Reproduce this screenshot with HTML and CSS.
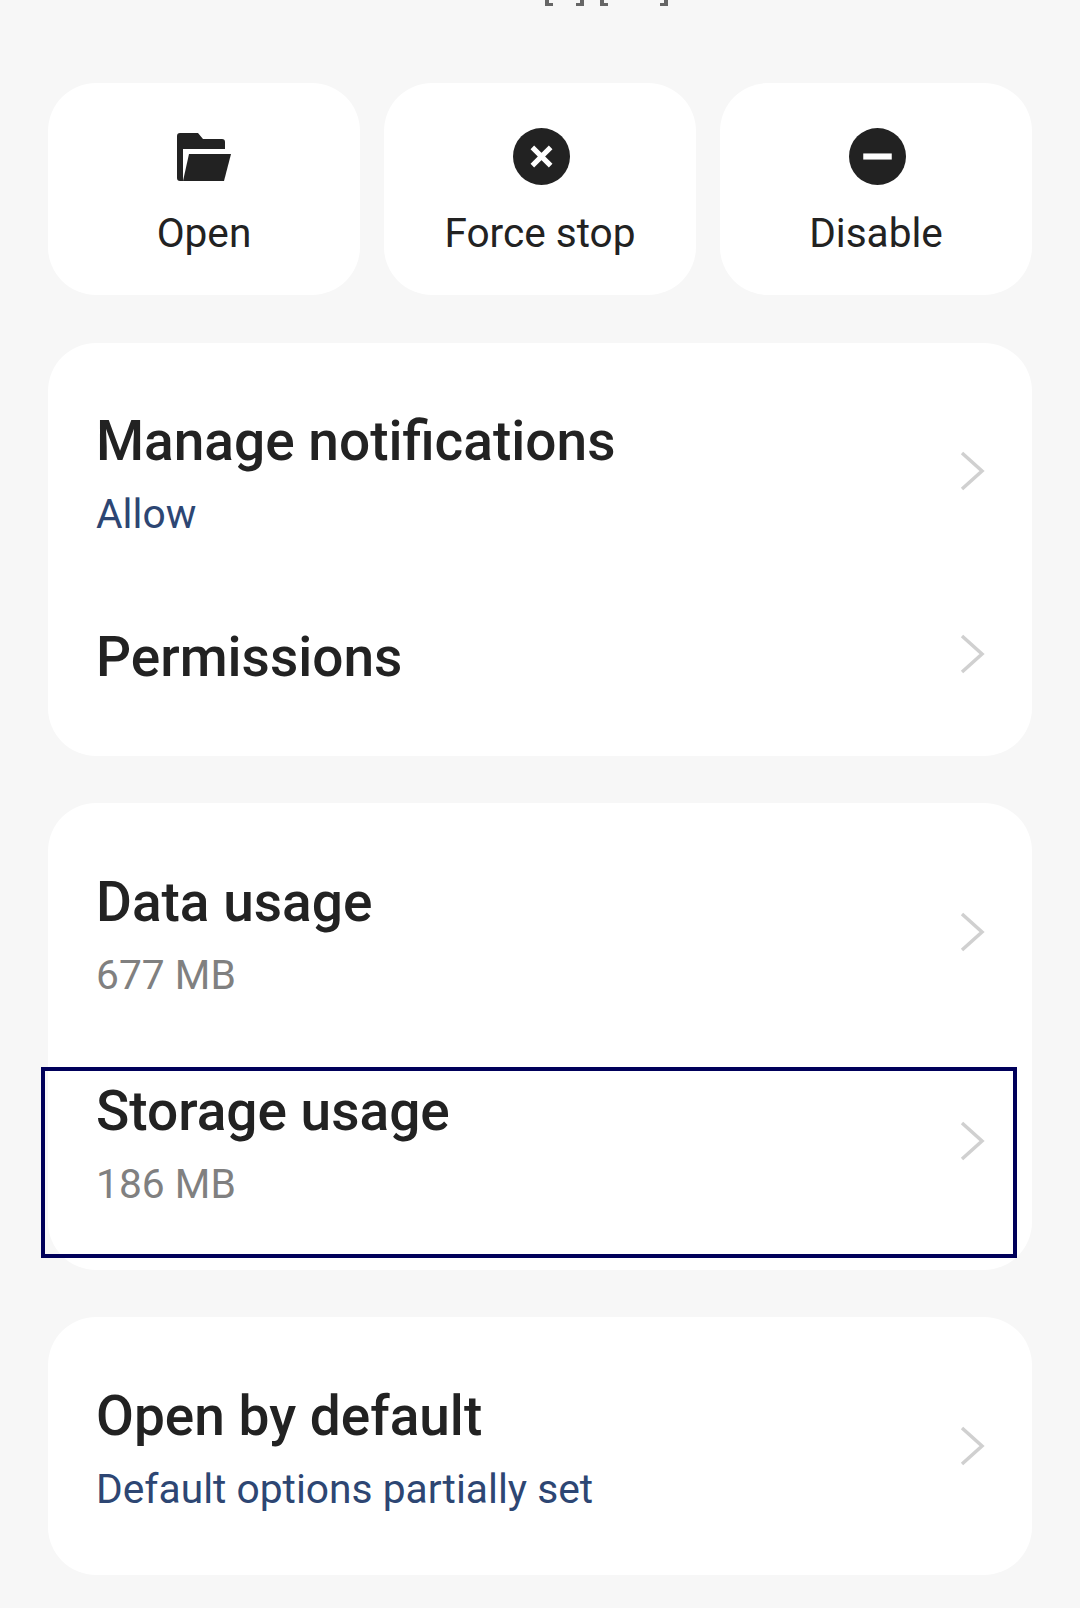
FILE: index.html
```html
<html>

<head>
<link rel="stylesheet" href="styles.css">
</head>
<body>

<div class="topcut">
	<svg width="124" height="6" viewBox="0 0 124 6">
		<path d="M0 0V6H8V3H4V0ZM39 0V6H31V3H35V0ZM55 0V6H63V3H59V0ZM123 0V6H115V3H119V0Z" fill="#666"/>
	</svg>
</div>

<div class="actions">
	<div class="action">
		<svg class="icon" width="54" height="57" viewBox="0 -5 54 57">
			<path d="M3 0H21L26 6H45Q48 6 48 9V16H6V48H3Q0 48 0 45V3Q0 0 3 0Z" fill="#222"/>
			<path d="M12 21H54L47 48H6Z" fill="#222"/>
		</svg>
		<span>Open</span>
	</div>
	<div class="action">
		<svg class="icon circ" width="57" height="57" viewBox="0 0 56 56">
			<circle cx="28" cy="28" r="28" fill="#222"/>
			<path d="M19 19L37 37M37 19L19 37" stroke="#fff" stroke-width="5"/>
		</svg>
		<span>Force stop</span>
	</div>
	<div class="action">
		<svg class="icon circ" width="57" height="57" viewBox="0 0 56 56">
			<circle cx="28" cy="28" r="28" fill="#222"/>
			<rect x="14" y="25" width="28" height="6" fill="#fff"/>
		</svg>
		<span>Disable</span>
	</div>
</div>

<div class="card first">
	<div class="row">
		<div class="text">
			<h4>Manage notifications</h4>
			<p class="blue">Allow</p>
		</div>
		<svg class="chev" width="25" height="40" viewBox="0 0 25 40"><path d="M2 2L22 20L2 38" /></svg>
	</div>
	<div class="row short">
		<div class="text">
			<h4>Permissions</h4>
		</div>
		<svg class="chev" width="25" height="40" viewBox="0 0 25 40"><path d="M2 2L22 20L2 38" /></svg>
	</div>
</div>

<div class="card">
	<div class="row">
		<div class="text">
			<h4>Data usage</h4>
			<p>677 MB</p>
		</div>
		<svg class="chev" width="25" height="40" viewBox="0 0 25 40"><path d="M2 2L22 20L2 38" /></svg>
	</div>
	<div class="row">
		<div class="text">
			<h4>Storage usage</h4>
			<p>186 MB</p>
		</div>
		<svg class="chev" width="25" height="40" viewBox="0 0 25 40"><path d="M2 2L22 20L2 38" /></svg>
	</div>
</div>

<div class="card">
	<div class="row">
		<div class="text">
			<h4>Open by default</h4>
			<p class="blue">Default options partially set</p>
		</div>
		<svg class="chev" width="25" height="40" viewBox="0 0 25 40"><path d="M2 2L22 20L2 38" /></svg>
	</div>
</div>

<div id="marca"></div>

</body>
</html>
```

FILE: styles.css
```css
html, body {
	margin: 0;
	padding: 0;
}
body {
	position: relative;
	width: 1080px;
	height: 1608px;
	overflow: hidden;
	background: #f7f7f7;
	font-family: Roboto, sans-serif;
	color: #222;
}
.topcut {
	height: 83px;
	padding-left: 545px;
	box-sizing: border-box;
}
.topcut svg {
	display: block;
}
.actions {
	display: grid;
	grid-template-columns: repeat(3, 312px);
	gap: 24px;
	padding-left: 48px;
}
.action {
	height: 212px;
	background: #fff;
	border-radius: 48px;
	display: flex;
	flex-direction: column;
	align-items: center;
	padding-top: 45px;
	box-sizing: border-box;
}
.circ {
	margin-left: 3px;
}
.action span {
	font-size: 40.6px;
	line-height: 48px;
	margin-top: 24px;
}
.card {
	width: 984px;
	margin: 47px 0 0 48px;
	padding: 24px 0 25px;
	background: #fff;
	border-radius: 48px;
	box-sizing: border-box;
}
.first {
	margin-top: 48px;
	padding: 23px 0 24px;
}
.row {
	height: 209px;
	display: flex;
	justify-content: space-between;
	align-items: center;
	padding: 0 47px 0 48px;
}
.short {
	height: 157px;
}
.text {
	padding-top: 7px;
}
h4 {
	margin: 0;
	font-size: 55px;
	font-weight: 500;
	line-height: 62px;
}
p {
	margin: 18px 0 0;
	font-size: 40.75px;
	line-height: 48px;
	color: #808080;
}
.blue {
	color: #2d4673;
}
.chev {
	fill: none;
	stroke: #d0d0d0;
	stroke-width: 3.5;
}
#marca {
	position: absolute;
	left: 41px;
	top: 1067px;
	width: 976px;
	height: 191px;
	box-sizing: border-box;
	border: 4px solid #00005a;
}
```
